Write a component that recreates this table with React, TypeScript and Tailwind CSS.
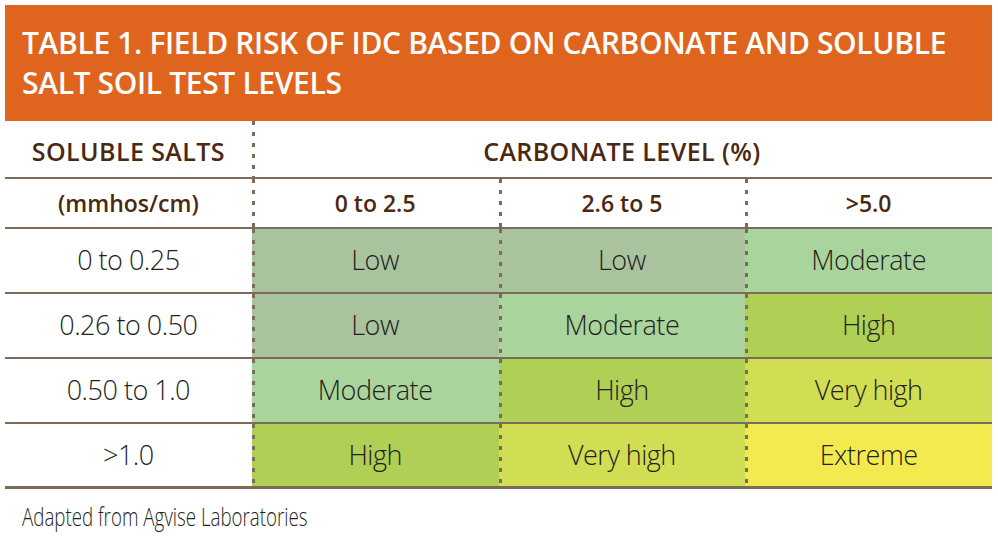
const rows = [
  { salt: '0 to 0.25', cells: ['Low', 'Low', 'Moderate'] },
  { salt: '0.26 to 0.50', cells: ['Low', 'Moderate', 'High'] },
  { salt: '0.50 to 1.0', cells: ['Moderate', 'High', 'Very high'] },
  { salt: '>1.0', cells: ['High', 'Very high', 'Extreme'] },
]

const fill: Record<string, string> = {
  Low: 'bg-[#a9c39f]',
  Moderate: 'bg-[#a9d49b]',
  High: 'bg-[#afcf55]',
  'Very high': 'bg-[#d1dd52]',
  Extreme: 'bg-[#f3ea50]',
}

// dotted divider drawn on the left edge of a cell
const dots =
  'bg-[image:repeating-linear-gradient(to_bottom,#7b6b5b_0px,#7b6b5b_4px,transparent_4px,transparent_11px)] bg-[length:3px_100%] bg-no-repeat bg-left'

export default function App() {
  return (
    <div className="bg-white min-h-[536px] pt-[5px] pl-[5px] font-['Open_Sans',sans-serif]">
      <div className="w-[987px]">
        <div className="h-[116px] bg-[#df641e] pl-[17px] pt-[18px]">
          <h1 className="text-white text-[30px] leading-[40px] font-semibold tracking-[-0.35px]">
            TABLE 1. FIELD RISK OF IDC BASED ON CARBONATE AND SOLUBLE
            <br />
            SALT SOIL TEST LEVELS
          </h1>
        </div>

        <div className="text-[#4b2810] font-semibold">
          <div className="grid grid-cols-4 h-[58px] border-b-2 border-[#7b6b5b] text-[25px] tracking-[0.4px]">
            <div className="flex items-center justify-center pt-[6px]">SOLUBLE SALTS</div>
            <div className={`col-span-3 flex items-center justify-center pt-[6px] ${dots}`}>
              CARBONATE LEVEL (%)
            </div>
          </div>
          <div className="grid grid-cols-4 h-[50px] border-b-2 border-[#7b6b5b] text-[23px]">
            <div className="flex items-center justify-center">(mmhos/cm)</div>
            <div className={`flex items-center justify-center ${dots}`}>0 to 2.5</div>
            <div className={`flex items-center justify-center ${dots}`}>2.6 to 5</div>
            <div className={`flex items-center justify-center ${dots}`}>&gt;5.0</div>
          </div>
        </div>

        <div className="text-[#231f20] text-[27px] font-light tracking-[-0.5px]">
          {rows.map((r, i) => (
            <div
              key={r.salt}
              className={`grid grid-cols-4 h-[65px] border-[#7b6b5b] ${
                i === rows.length - 1 ? 'border-b-[3px]' : 'border-b-2'
              }`}
            >
              <div className="flex items-center justify-center">{r.salt}</div>
              {r.cells.map((c, j) => (
                <div key={j} className={`flex items-center justify-center ${fill[c]} ${dots}`}>
                  {c}
                </div>
              ))}
            </div>
          ))}
        </div>

        <div className="pt-[8px] pl-[17px]">
          <span className="inline-block origin-left scale-x-[0.72] text-[26px] font-light text-[#231f20] whitespace-nowrap">
            Adapted from Agvise Laboratories
          </span>
        </div>
      </div>
    </div>
  )
}
